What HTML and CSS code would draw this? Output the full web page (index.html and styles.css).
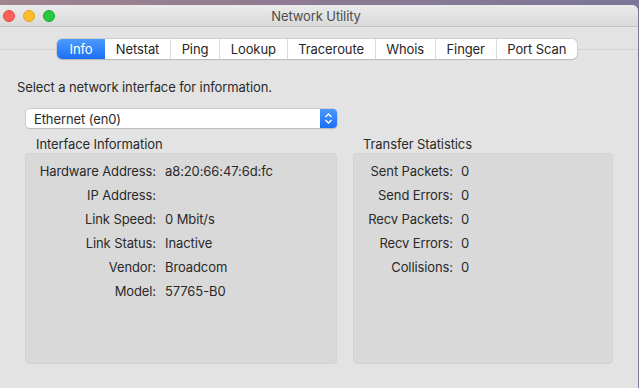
FILE: index.html
```html
<!DOCTYPE html>
<html lang="en">
<head>
  <meta charset="UTF-8">
  <title>Network Utility</title>
  <link rel="stylesheet" href="styles.css">
</head>
<body>
  <div class="window">
    <div class="titlebar">
      <div class="lights">
        <span class="light red"></span>
        <span class="light yellow"></span>
        <span class="light green"></span>
      </div>
      <div class="title">Network Utility</div>
    </div>

    <div class="tabbar">
      <div class="tabs">
        <span class="tab active">Info</span>
        <span class="tab">Netstat</span>
        <span class="tab">Ping</span>
        <span class="tab">Lookup</span>
        <span class="tab">Traceroute</span>
        <span class="tab">Whois</span>
        <span class="tab">Finger</span>
        <span class="tab">Port Scan</span>
      </div>
    </div>

    <div class="content">
      <p class="hint">Select a network interface for information.</p>

      <div class="popup">
        <span class="popup-value">Ethernet (en0)</span>
        <span class="stepper">
          <svg width="9" height="13" viewBox="0 0 9 13">
            <path d="M1.5 5 L4.5 2 L7.5 5" fill="none" stroke="#fff" stroke-width="1.4"/>
            <path d="M1.5 8 L4.5 11 L7.5 8" fill="none" stroke="#fff" stroke-width="1.4"/>
          </svg>
        </span>
      </div>

      <div class="groups">
        <div class="group">
          <div class="group-title">Interface Information</div>
          <div class="box info-box">
            <span class="label">Hardware Address:</span><span class="value">a8:20:66:47:6d:fc</span>
            <span class="label">IP Address:</span><span class="value"></span>
            <span class="label">Link Speed:</span><span class="value">0 Mbit/s</span>
            <span class="label">Link Status:</span><span class="value">Inactive</span>
            <span class="label">Vendor:</span><span class="value">Broadcom</span>
            <span class="label">Model:</span><span class="value">57765-B0</span>
          </div>
        </div>
        <div class="group">
          <div class="group-title stats-title">Transfer Statistics</div>
          <div class="box stats-box">
            <span class="label">Sent Packets:</span><span class="value">0</span>
            <span class="label">Send Errors:</span><span class="value">0</span>
            <span class="label">Recv Packets:</span><span class="value">0</span>
            <span class="label">Recv Errors:</span><span class="value">0</span>
            <span class="label">Collisions:</span><span class="value">0</span>
          </div>
        </div>
      </div>
    </div>
  </div>
</body>
</html>
```
FILE: styles.css
```css
body {
  margin: 0;
  padding: 0;
  height: 388px;
  overflow: hidden;
  font-family: Inter, 'Noto Sans', sans-serif;
  font-size: 13px;
  letter-spacing: -0.1px;
  color: #2a2a2a;
  background: linear-gradient(90deg, #a0848f 0%, #8c7a92 50%, #7c7698 100%);
}

.window {
  margin-top: 5px;
  width: 638px;
  height: 383px;
  background-color: #e3e3e3;
  border-top-right-radius: 6px;
  overflow: hidden;
}

.titlebar {
  position: relative;
  height: 21px;
  background: linear-gradient(#ebebeb, #d9d9d9);
  border-bottom: 1px solid #c3c3c3;
  display: flex;
  align-items: center;
  justify-content: center;
}

.lights {
  position: absolute;
  left: 3px;
  top: 5px;
  display: flex;
  gap: 8px;
}

.light {
  width: 12px;
  height: 12px;
  border-radius: 50%;
  box-sizing: border-box;
}

.red { background-color: #fe5f57; border: 1px solid #e2463f; }
.yellow { background-color: #febc2e; border: 1px solid #e1a116; }
.green { background-color: #28c840; border: 1px solid #14ae2a; }

.title {
  color: #4d4d4d;
  font-size: 13px;
  margin-left: -6px;
}

.tabbar {
  margin-top: 12px;
  position: relative;
  display: flex;
  justify-content: center;
}

.tabbar::before {
  content: "";
  position: absolute;
  left: 0;
  right: 0;
  top: 10px;
  border-top: 1px solid #d3d3d3;
}

.tabs {
  position: relative;
  display: flex;
  height: 20px;
  margin-left: -4px;
  background-color: #fff;
  border-radius: 5px;
  box-shadow: 0 0 0 0.5px #b8b8b8, 0 1px 1px rgba(0, 0, 0, 0.18);
}

.tab {
  display: flex;
  align-items: center;
  justify-content: center;
  padding: 0 10.7px;
  border-left: 1px solid #dcdcdc;
  color: #262626;
}

.tab:first-child {
  border-left: none;
}

.tab.active {
  background: linear-gradient(#4d9bfb, #1b6ff5);
  color: #fff;
  border-radius: 5px 0 0 5px;
  padding: 0 12.5px;
}

.tab.active + .tab {
  border-left: none;
}

.content {
  padding-top: 20px;
}

.hint {
  margin: 0 0 0 17px;
  line-height: 16px;
}

.popup {
  margin: 14px 0 0 26px;
  width: 311px;
  height: 19px;
  display: flex;
  align-items: center;
  background-color: #fff;
  border-radius: 4px;
  box-shadow: 0 0 0 0.5px #b5b5b5, 0 1px 1px rgba(0, 0, 0, 0.15);
}

.popup-value {
  flex: 1;
  padding-left: 8px;
}

.stepper {
  width: 17px;
  height: 19px;
  display: flex;
  align-items: center;
  justify-content: center;
  background: linear-gradient(#4a98fb, #1c6ff5);
  border-radius: 0 4px 4px 0;
}

.groups {
  display: grid;
  grid-template-columns: 312px 260px;
  column-gap: 16px;
  margin: 8px 0 0 25px;
}

.group-title {
  padding-left: 11px;
  line-height: 17px;
}

.stats-title {
  padding-left: 10px;
}

.box {
  height: 204px;
  background-color: #d9d9d9;
  border: 1px solid #d2d2d2;
  border-radius: 4px;
  display: grid;
  align-content: start;
  column-gap: 9px;
  padding-top: 5px;
  box-sizing: content-box;
}

.info-box {
  grid-template-columns: 130px 1fr;
}

.stats-box {
  grid-template-columns: 99px 1fr;
  column-gap: 8px;
}

.label {
  text-align: right;
  line-height: 24px;
}

.value {
  line-height: 24px;
}
```
